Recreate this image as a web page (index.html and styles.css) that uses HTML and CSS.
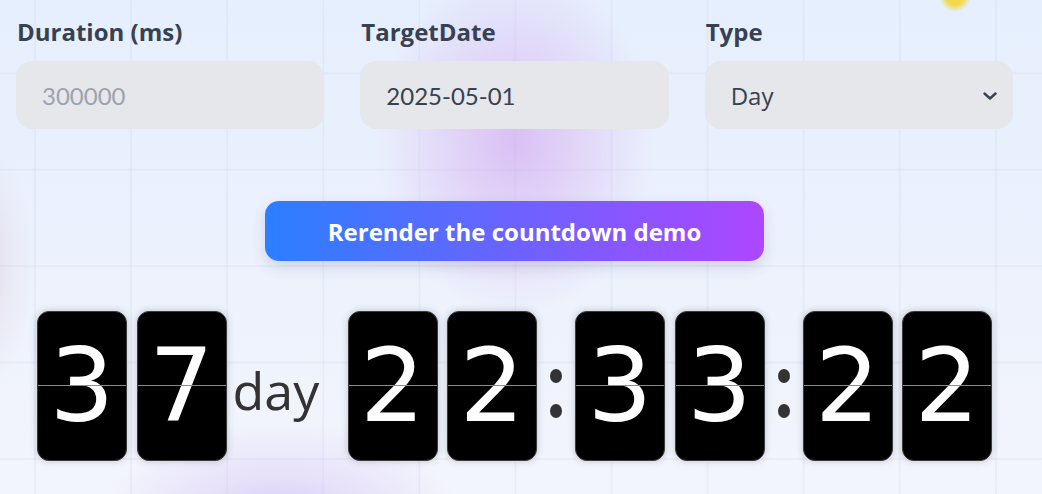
FILE: index.html
```html
<!DOCTYPE html>
<html lang="en">
<head>
<meta charset="utf-8">
<title>Countdown demo</title>
<link rel="stylesheet" href="styles.css">
</head>
<body>
<main class="page">
  <section class="fields">
    <div class="field">
      <label class="field-label" for="duration">Duration (ms)</label>
      <input class="field-input is-disabled" id="duration" type="text" value="300000" disabled>
    </div>
    <div class="field">
      <label class="field-label" for="target">TargetDate</label>
      <input class="field-input" id="target" type="text" value="2025-05-01">
    </div>
    <div class="field">
      <span class="field-label">Type</span>
      <div class="field-input field-select">
        <span class="select-value">Day</span>
        <svg class="chevron" width="14" height="8" viewBox="0 0 14 8" aria-hidden="true"><path d="M1.5 1.5 L7 6.5 L12.5 1.5" fill="none" stroke="#374151" stroke-width="2.4" stroke-linecap="round" stroke-linejoin="round"/></svg>
      </div>
    </div>
  </section>

  <div class="action">
    <button class="rerender" type="button">Rerender the countdown demo</button>
  </div>

  <div class="clock">
    <div class="pair">
      <div class="card"><span class="digit">3</span></div>
      <div class="card"><span class="digit">7</span></div>
    </div>
    <div class="unit">day</div>
    <div class="pair">
      <div class="card"><span class="digit">2</span></div>
      <div class="card"><span class="digit">2</span></div>
    </div>
    <div class="colon"><span class="dot"></span><span class="dot"></span></div>
    <div class="pair">
      <div class="card"><span class="digit">3</span></div>
      <div class="card"><span class="digit">3</span></div>
    </div>
    <div class="colon"><span class="dot"></span><span class="dot"></span></div>
    <div class="pair">
      <div class="card"><span class="digit">2</span></div>
      <div class="card"><span class="digit">2</span></div>
    </div>
  </div>
</main>
</body>
</html>
```
FILE: styles.css
```css
* { box-sizing: border-box; }

html, body {
  margin: 0;
  height: 494px;
  overflow: hidden;
}

body {
  background-color: #eef3fd;
  background-image:
    radial-gradient(circle at 955px -4px, rgba(245, 214, 60, 0.95) 0, rgba(245, 214, 60, 0.9) 9px, rgba(245, 214, 60, 0) 16px),
    radial-gradient(ellipse 140px 175px at 515px 140px, rgba(208, 162, 238, 0.62) 0, rgba(214, 176, 240, 0.38) 50%, rgba(220, 190, 245, 0) 100%),
    radial-gradient(ellipse 190px 120px at 280px 540px, rgba(200, 175, 245, 0.75) 0, rgba(210, 190, 245, 0.35) 55%, rgba(215, 200, 245, 0) 100%),
    radial-gradient(ellipse 60px 130px at -25px 265px, rgba(205, 165, 175, 0.4) 0, rgba(215, 190, 205, 0.18) 55%, rgba(220, 200, 215, 0) 100%),
    linear-gradient(to right, rgba(196, 206, 228, 0.2) 2px, transparent 2px),
    linear-gradient(to bottom, rgba(196, 206, 228, 0.2) 2px, transparent 2px),
    linear-gradient(to bottom, #e6effd 0, #ebf1fd 45%, #f3f5fc 100%);
  background-size: auto, auto, auto, auto, 96.1px 96.4px, 96.1px 96.4px, auto;
  background-position: 0 0, 0 0, 0 0, 0 0, 34px -24px, 34px -24px, 0 0;
  background-repeat: no-repeat, no-repeat, no-repeat, no-repeat, repeat, repeat, no-repeat;
}

.page {
  width: 997px;
  margin-left: 16px;
  padding-top: 16px;
}

.fields {
  display: grid;
  grid-template-columns: repeat(3, 1fr);
  column-gap: 36px;
}

.field {
  display: flex;
  flex-direction: column;
}

.field-label {
  font-family: "Open Sans", "Liberation Sans", sans-serif;
  font-weight: 700;
  font-size: 24px;
  line-height: 32px;
  color: #374151;
  margin-bottom: 13px;
  padding-left: 1px;
}

.field-input {
  height: 68px;
  border: 0;
  border-radius: 16px;
  background: #e5e7eb;
  padding: 0 24px 0 26px;
  font-family: Lato, "Open Sans", sans-serif;
  font-size: 24px;
  color: #374151;
  outline: none;
  width: 100%;
}

.field-input.is-disabled {
  color: #9ca3af;
  -webkit-text-fill-color: #9ca3af;
  opacity: 1;
}

.field-select {
  display: flex;
  align-items: center;
  justify-content: space-between;
  padding-right: 16px;
}

.select-value {
  font-family: "Open Sans", "Liberation Sans", sans-serif;
  font-size: 24px;
  color: #374151;
}

.chevron { display: block; margin-top: 2px; }

.action {
  display: flex;
  justify-content: center;
  margin-top: 72px;
}

.rerender {
  width: 499px;
  height: 60px;
  border: 0;
  border-radius: 14px;
  background: linear-gradient(90deg, #2b7fff 0%, #ad46ff 100%);
  box-shadow: 0 6px 14px rgba(60, 60, 100, 0.16);
  color: #ffffff;
  font-family: "Open Sans", "Liberation Sans", sans-serif;
  font-weight: 700;
  font-size: 24px;
  cursor: pointer;
}

.clock {
  display: flex;
  justify-content: center;
  align-items: center;
  margin-top: 50px;
}

.pair {
  display: flex;
  gap: 9.5px;
}

.card {
  position: relative;
  width: 90px;
  height: 150px;
  background: #000;
  border: 1px solid #3c3c3c;
  border-radius: 12px;
  box-shadow: 0 0 7px rgba(40, 50, 70, 0.25);
  display: flex;
  align-items: center;
  justify-content: center;
}

.card::after {
  content: "";
  position: absolute;
  left: 0;
  right: 0;
  top: 73px;
  height: 1px;
  background: #8a8a8a;
}

.digit {
  font-family: "DejaVu Sans", Verdana, sans-serif;
  font-size: 102px;
  line-height: 1;
  color: #fff;
}

.unit {
  width: 121px;
  padding: 8px 0 0 6px;
  font-family: "Open Sans", "Liberation Sans", sans-serif;
  font-size: 52px;
  line-height: 52px;
  color: #333;
}

.colon {
  width: 38px;
  display: flex;
  flex-direction: column;
  align-items: center;
  gap: 21px;
  margin-top: 14px;
}

.dot {
  width: 12px;
  height: 14px;
  border-radius: 50%;
  background: #333;
}
```
